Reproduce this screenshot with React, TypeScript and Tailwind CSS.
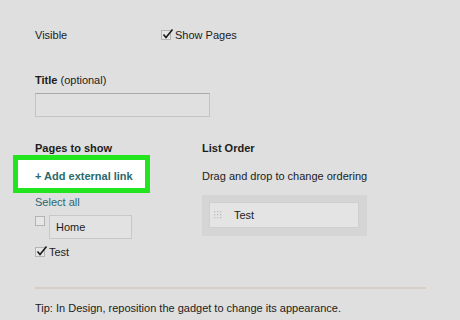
import React from "react";

function Box({ checked }: { checked?: boolean }) {
  return (
    <span className="relative inline-block w-[10px] h-[10px] border border-[#b4b4b4] bg-[#e6e6e6] shrink-0">
      {checked && (
        <svg className="absolute left-[0px] top-[-3px]" width="12" height="12" viewBox="0 0 12 12">
          <path d="M1.5 6.5 L4 9.5 L10.5 1.5" fill="none" stroke="#1a1a1a" strokeWidth="1.6" />
        </svg>
      )}
    </span>
  );
}

export default function App() {
  return (
    <div className="w-[460px] h-[320px] overflow-hidden bg-[#dfdfdf] pl-[35px] pt-[28px] font-['Liberation_Sans',Arial,sans-serif] text-[11px] leading-[14px] text-[#1c1c1c]">
      <div className="flex items-center h-[14px]">
        <span className="w-[126px]">Visible</span>
        <Box checked />
        <span className="ml-[4px]">Show Pages</span>
      </div>
      <div className="mt-[31px] h-[14px]">
        <span className="font-bold">Title</span> (optional)
      </div>
      <div className="mt-[6px] w-[175px] h-[24px] border border-[#c4c4c4] border-t-[#a8a8a8] bg-[#e0e0e0]" />
      <div className="mt-[24px] flex">
        <div className="w-[167px] flex flex-col">
          <div className="font-bold h-[14px]">Pages to show</div>
          <div className="ml-[-22px] w-[137px] h-[38px] border-[5px] border-[#22e41f] bg-white flex items-center pl-[17px] pt-[4px] font-bold text-[#2a6a6c]">
            + Add external link
          </div>
          <div className="mt-[2px] h-[14px] text-[#2d6771]">Select all</div>
          <div className="mt-[6px] flex items-start">
            <span className="mt-[1px] flex"><Box /></span>
            <div className="ml-[4px] w-[83px] h-[24px] border border-[#c8c8c8] bg-[#e2e2e2] flex items-center pl-[6px]">Home</div>
          </div>
          <div className="mt-[6px] h-[14px] flex items-center">
            <Box checked />
            <span className="ml-[4px]">Test</span>
          </div>
        </div>
        <div className="flex flex-col">
          <div className="font-bold h-[14px]">List Order</div>
          <div className="mt-[14px] h-[14px]">Drag and drop to change ordering</div>
          <div className="mt-[12px] w-[165px] h-[41px] bg-[#d5d5d5] p-[7px]">
            <div className="w-[150px] h-[26px] border border-[#cfcfcf] bg-[#e4e4e4] flex items-center">
              <svg className="ml-[4px]" width="8" height="9" viewBox="0 0 8 9">
                {[0, 1, 2].map((r) =>
                  [0, 1, 2].map((c) => (
                    <rect key={`${r}-${c}`} x={c * 3} y={r * 3} width="1.3" height="1.3" fill="#bdbdbd" />
                  ))
                )}
              </svg>
              <span className="ml-[12px]">Test</span>
            </div>
          </div>
        </div>
      </div>
      <div className="mt-[28px] w-[391px] h-[2px] bg-[#d6cdc4]" />
      <div className="mt-[12px] h-[14px]">Tip: In Design, reposition the gadget to change its appearance.</div>
    </div>
  );
}
